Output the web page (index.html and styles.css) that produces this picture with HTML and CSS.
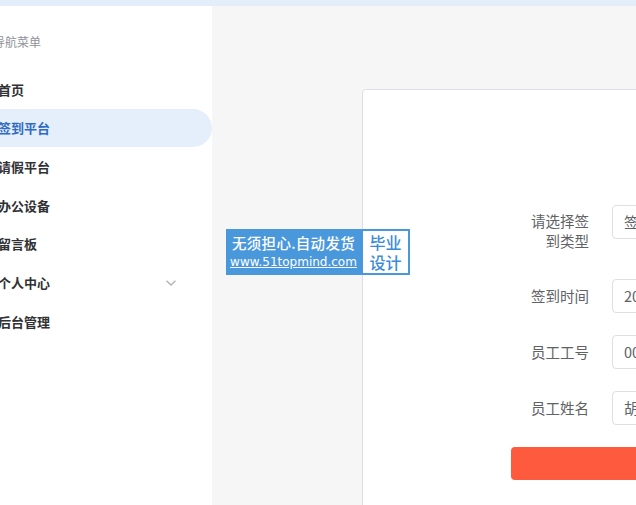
FILE: index.html
```html
<!DOCTYPE html>
<html lang="zh-CN">
<head>
<meta charset="utf-8">
<title>签到平台</title>
<link rel="stylesheet" href="styles.css">
</head>
<body>
<div class="topbar"></div>
<div class="layout">
  <aside class="sidebar">
    <div class="group-title">导航菜单</div>
    <ul class="menu">
      <li class="item">首页</li>
      <li class="item active">签到平台</li>
      <li class="item">请假平台</li>
      <li class="item">办公设备</li>
      <li class="item">留言板</li>
      <li class="item submenu">个人中心
        <svg class="chev" width="12" height="8" viewBox="0 0 12 8"><path d="M1.5 1.8 L6 6 L10.5 1.8" fill="none" stroke="#b0b3b8" stroke-width="1.4"/></svg>
      </li>
      <li class="item">后台管理</li>
    </ul>
  </aside>
  <main class="main">
    <div class="card">
      <form class="form">
        <div class="form-item first">
          <label class="label">请选择签到类型</label>
          <div class="input">签到</div>
        </div>
        <div class="form-item">
          <label class="label">签到时间</label>
          <div class="input">2023-05-12 08:30:00</div>
        </div>
        <div class="form-item">
          <label class="label">员工工号</label>
          <div class="input">001</div>
        </div>
        <div class="form-item">
          <label class="label">员工姓名</label>
          <div class="input">胡明</div>
        </div>
        <button type="button" class="submit">提交</button>
      </form>
    </div>
  </main>
</div>
<div class="watermark">
  <div class="wm-left">
    <span class="wm-line1">无须担心.自动发货</span>
    <span class="wm-line2">www.51topmind.com</span>
  </div>
  <div class="wm-right">毕业<br>设计</div>
</div>
</body>
</html>
```
FILE: styles.css
```css
* { box-sizing: border-box; }
html, body {
  margin: 0;
  padding: 0;
  width: 636px;
  height: 505px;
  overflow: hidden;
  font-family: "Noto Sans CJK SC", "Noto Sans", sans-serif;
  background: #f6f6f6;
}
.topbar {
  height: 6px;
  background: #e4eefa;
}
.layout {
  display: flex;
  height: 499px;
}
.sidebar {
  width: 212px;
  flex: none;
  background: #ffffff;
  overflow: hidden;
}
.group-title {
  margin-top: 27px;
  margin-left: -7px;
  font-size: 12px;
  line-height: 18px;
  color: #909399;
}
.menu {
  list-style: none;
  margin: 19px 0 0 0;
  padding: 0;
}
.item {
  position: relative;
  display: flex;
  align-items: center;
  height: 38.67px;
  padding-left: 0;
  margin-left: -2px;
  font-size: 13px;
  font-weight: 700;
  color: #303133;
  border-radius: 0 20px 20px 0;
}
.item.active {
  background: #e5eefb;
  color: #2f6bc4;
}
.chev {
  position: absolute;
  left: 167px;
  top: 16px;
}
.main {
  flex: 1;
  overflow: hidden;
}
.card {
  margin: 83px 0 0 150px;
  width: 600px;
  height: 500px;
  background: #ffffff;
  border: 1px solid #dcdfe6;
  border-radius: 4px;
  padding: 115px 0 0 148px;
}
.form {
  width: 420px;
}
.form-item {
  display: flex;
  align-items: center;
  margin-bottom: 22px;
}
.form-item.first {
  align-items: flex-start;
}
.label {
  width: 101px;
  flex: none;
  padding: 0 23px 0 16px;
  text-align: right;
  font-size: 14.5px;
  line-height: 34px;
  color: #606266;
}
.form-item.first .label {
  line-height: 20px;
  padding-top: 6px;
  padding-bottom: 6px;
}
.input {
  flex: 1;
  height: 34px;
  border: 1px solid #dcdfe6;
  border-radius: 4px;
  padding: 0 11px;
  font-size: 14.5px;
  line-height: 32px;
  color: #606266;
  white-space: nowrap;
  overflow: hidden;
}
.submit {
  display: block;
  width: 320px;
  height: 33px;
  border: none;
  border-radius: 4px;
  background: #fe5a3d;
  color: #fff;
  font-family: inherit;
  font-size: 14px;
}
.watermark {
  position: absolute;
  left: 226px;
  top: 229px;
  display: flex;
  height: 46px;
}
.wm-left {
  width: 135px;
  background: #4a98dc;
  color: #ffffff;
  display: flex;
  flex-direction: column;
  align-items: center;
  justify-content: center;
}
.wm-line1 {
  font-size: 14.5px;
  font-weight: 500;
  line-height: 20px;
  letter-spacing: 0.3px;
}
.wm-line2 {
  font-family: "DejaVu Sans", sans-serif;
  font-size: 12px;
  line-height: 18px;
  text-decoration: underline;
}
.wm-right {
  width: 49px;
  background: #ffffff;
  border: 2px solid #4a98dc;
  color: #3b8bd6;
  font-size: 16px;
  font-weight: 500;
  line-height: 20px;
  text-align: center;
  padding-top: 1px;
}
```
